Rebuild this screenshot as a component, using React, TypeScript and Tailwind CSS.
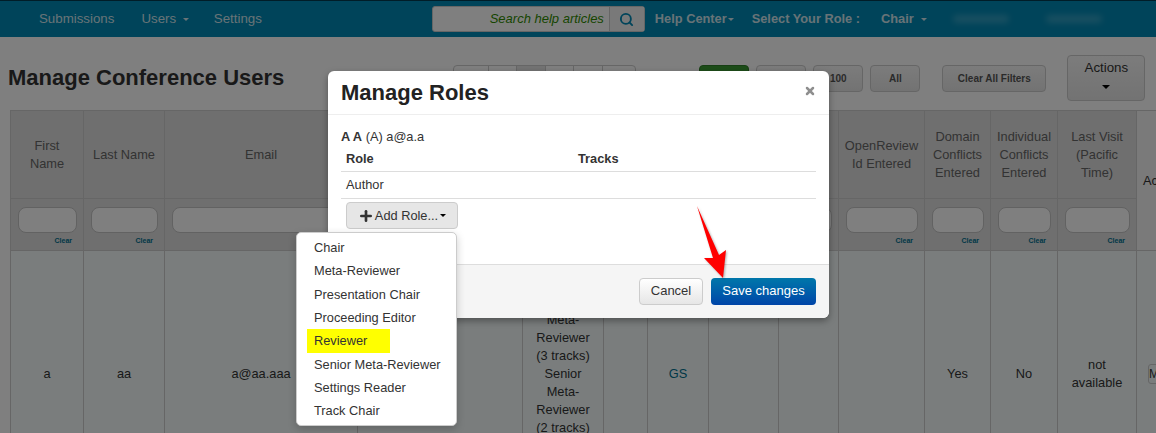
import { Plus, Search, X } from 'lucide-react'

const sans = "font-['Liberation_Sans',Arial,sans-serif]"

const columns = [73, 81, 193, 165, 81, 44, 61, 70, 60, 86, 66, 67, 79, 90]

const headers = [
  'First Name',
  'Last Name',
  'Email',
  '',
  '',
  '',
  '',
  '',
  '',
  'OpenReview Id Entered',
  'Domain Conflicts Entered',
  'Individual Conflicts Entered',
  'Last Visit (Pacific Time)',
  'Actions',
]

const roleLines = [
  'Author',
  'Chair',
  'Reader',
  'Meta-',
  'Reviewer',
  '(3 tracks)',
  'Senior',
  'Meta-',
  'Reviewer',
  '(2 tracks)',
  'Track',
  'Chair',
  'Reader',
]

const roles = [
  'Chair',
  'Meta-Reviewer',
  'Presentation Chair',
  'Proceeding Editor',
  'Reviewer',
  'Senior Meta-Reviewer',
  'Settings Reader',
  'Track Chair',
]

const pageButtons = [
  { label: '', cls: 'bg-[#3a9a32] border-[#2f7f28]' },
  { label: '', cls: 'bg-gradient-to-b from-[#f8f8f8] to-[#e6e6e6] border-[#ccc] ml-[7px]' },
  { label: '100', cls: 'bg-gradient-to-b from-[#f8f8f8] to-[#e6e6e6] border-[#ccc] ml-[7px]' },
  { label: 'All', cls: 'bg-gradient-to-b from-[#f8f8f8] to-[#e6e6e6] border-[#ccc] ml-[7px]' },
]

const Filter = ({ hidden }: { hidden?: boolean }) => (
  <td className="h-[52px] border border-[#ccc] bg-[#dedede] pt-[8px] pr-[6px] pl-[7px] align-top">
    {!hidden && (
      <>
        <div className="h-[26px] rounded-[8px] border border-[#c4c4c4] bg-white" />
        <div className="mt-[3px] pr-[5px] text-right text-[7px] leading-[10px] font-bold text-[#00708f]">Clear</div>
      </>
    )}
  </td>
)

export default function App() {
  return (
    <div className={`${sans} relative h-[433px] w-[1156px] overflow-hidden bg-white text-[12.8px] text-[#333]`}>
      <nav className="flex h-[37px] items-center border-t border-[#003a50] bg-[#0088b4] pl-[39px] text-[13.3px] text-[#d0e6ee]">
        <span className="mr-[27px]">Submissions</span>
        <span className="mr-[25px]">
          Users <span className="ml-[3px] inline-block border-x-[3px] border-t-[3px] border-x-transparent border-t-current align-middle" />
        </span>
        <span>Settings</span>
        <div className="ml-[170px] flex h-[26px] w-[213px] rounded-[3px] border border-[#ccc] bg-white">
          <div className="flex-1 pr-[5px] text-right text-[13px] leading-[24px] text-[#2e8b00] italic">Search help articles</div>
          <div className="flex w-[35px] items-center justify-center border-l border-[#ccc] bg-[#f2f2f2]">
            <Search size={15} strokeWidth={3} className="text-[#0088b4]" />
          </div>
        </div>
        <span className="ml-[10px] text-[12.8px] font-bold">Help Center</span>
        <span className="ml-[1px] inline-block border-x-[3px] border-t-[3px] border-x-transparent border-t-current" />
        <span className="ml-[18px] text-[12.8px] font-bold">Select Your Role :</span>
        <span className="ml-[21px] text-[12.8px] font-bold">Chair</span>
        <span className="ml-[7px] inline-block border-x-[3px] border-t-[3px] border-x-transparent border-t-current" />
        <span className="ml-[26px] h-[8px] w-[56px] rounded-full bg-white/20 blur-[3px]" />
        <span className="ml-[37px] h-[8px] w-[56px] rounded-full bg-white/20 blur-[3px]" />
      </nav>

      <div className="flex h-[73px]">
        <h1 className="mt-[27px] ml-[8px] text-[22px] leading-[28px] font-bold text-[#333]">Manage Conference Users</h1>
        <div className="mt-[28px] ml-[169px] flex h-[27px] w-[183px] rounded-[4px] border border-[#ccc]">
          <span className="w-[35px] border-r border-[#ccc]" />
          <span className="w-[28px] border-r border-[#ccc]" />
          <span className="w-[29px] border-r border-[#ccc] bg-[#e6e6e6]" />
          <span className="w-[28px] border-r border-[#ccc]" />
          <span className="w-[29px] border-r border-[#ccc]" />
        </div>
        <div className="mt-[28px] ml-[63px] flex">
          {pageButtons.map((b, i) => (
            <div key={i} className={`${b.cls} flex h-[27px] w-[50px] items-center justify-center rounded-[4px] border text-[10px] font-bold text-[#555]`}>
              {b.label}
            </div>
          ))}
        </div>
        <div className="mt-[28px] ml-[22px] flex h-[27px] w-[104px] items-center justify-center rounded-[4px] border border-[#ccc] bg-gradient-to-b from-[#f8f8f8] to-[#e6e6e6] text-[10px] font-bold text-[#555]">
          Clear All Filters
        </div>
        <div className="mt-[18px] ml-[21px] flex h-[46px] w-[78px] flex-col items-center rounded-[4px] border border-[#ccc] bg-gradient-to-b from-[#f8f8f8] to-[#e6e6e6] pt-[4px]">
          <span className="text-[13.3px] leading-[16px]">Actions</span>
          <span className="mt-[9px] border-x-[4px] border-t-[4px] border-x-transparent border-t-[#000]" />
        </div>
      </div>

      <table className="ml-[10px] table-fixed border-collapse text-center" style={{ width: columns.reduce((a, b) => a + b, 0) }}>
        <colgroup>
          {columns.map((w, i) => (
            <col key={i} style={{ width: w }} />
          ))}
        </colgroup>
        <thead>
          <tr className="h-[88px]">
            {headers.map((h, i) =>
              i === 13 ? (
                <th key={i} rowSpan={2} className="border border-[#ccc] bg-[#f4f4f4] pl-[6px] text-left font-normal">
                  {h}
                </th>
              ) : (
                <th key={i} className={`border border-[#ccc] bg-[#dedede] ${i === 0 ? 'px-[14px]' : 'px-[2px]'} leading-[18px] font-normal text-[#666]`}>
                  {h}
                </th>
              ),
            )}
          </tr>
          <tr>
            {headers.slice(0, 13).map((_, i) => (
              <Filter key={i} hidden={i > 2 && i < 8} />
            ))}
          </tr>
        </thead>
        <tbody>
          <tr className="bg-[#f4fbfb] leading-[18px]">
            <td className="border border-[#ccc]">a</td>
            <td className="border border-[#ccc]">aa</td>
            <td className="border border-[#ccc]">a@aa.aaa</td>
            <td className="border border-[#ccc]" />
            <td className="border border-[#ccc] py-[6px]">
              {roleLines.map((line, i) => (
                <div key={i}>{line}</div>
              ))}
            </td>
            <td className="border border-[#ccc]" />
            <td className="border border-[#ccc] text-[#00708f]">GS</td>
            <td className="border border-[#ccc]" />
            <td className="border border-[#ccc]" />
            <td className="border border-[#ccc]" />
            <td className="border border-[#ccc]">Yes</td>
            <td className="border border-[#ccc]">No</td>
            <td className="border border-[#ccc]">
              not
              <br />
              available
            </td>
            <td className="border border-[#ccc] pl-[11px] text-left">
              <span className="inline-block h-[20px] w-[30px] rounded-[3px] border border-[#ccc] text-[12px] leading-[18px]">M</span>
            </td>
          </tr>
        </tbody>
      </table>

      {/* backdrop */}
      <div className="absolute inset-0 bg-black/50" />

      {/* modal */}
      <div className="absolute top-[71px] left-[328px] flex h-[247px] w-[501px] flex-col rounded-[6px] bg-white shadow-[0_3px_7px_rgba(0,0,0,0.35)]">
        <div className="flex h-[44px] items-center justify-between border-b border-[#eee] pr-[13px] pl-[13px]">
          <h3 className="text-[22px] leading-[30px] font-bold text-[#222]">Manage Roles</h3>
          <X size={12} strokeWidth={5} className="-mt-[4px] text-[#8f8f8f]" />
        </div>
        <div className="flex-1 px-[13px] pt-[13px]">
          <div className="leading-[18px]">
            <b>A A</b> (A) a@a.a
          </div>
          <div className="flex h-[26px] items-center border-b border-[#ddd] px-[5px] font-bold">
            <span className="w-[232px]">Role</span>
            <span>Tracks</span>
          </div>
          <div className="flex h-[27px] items-center border-b border-[#ddd] px-[5px]">Author</div>
          <div className="mt-[3px] ml-[5px] flex h-[27px] w-[112px] items-center justify-center rounded-[4px] border border-[#ccc] bg-[#e6e6e6]">
            <Plus size={16} strokeWidth={4} className="mr-[1px] text-[#333]" />
            Add Role...
            <span className="ml-[2px] border-x-[3px] border-t-[3px] border-x-transparent border-t-[#000]" />
          </div>
        </div>
        <div className="flex h-[54px] items-center justify-end gap-[8px] rounded-b-[6px] border-t border-[#ddd] bg-[#f5f5f5] pr-[13px]">
          <div className="flex h-[27px] w-[64px] items-center justify-center rounded-[4px] border border-[#ccc] bg-gradient-to-b from-white to-[#e6e6e6] pb-[1px] text-[13px]">Cancel</div>
          <div className="flex h-[27px] w-[105px] items-center justify-center rounded-[4px] bg-gradient-to-b from-[#0077aa] to-[#0044a8] pb-[1px] text-[13px] text-white">Save changes</div>
        </div>
      </div>

      {/* role dropdown */}
      <div className="absolute top-[232px] left-[296px] w-[161px] rounded-[5px] border border-[#ccc] bg-white py-[3px] shadow-[0_3px_8px_rgba(0,0,0,0.2)]">
        {roles.map((role) => (
          <div key={role} className="flex h-[23.3px] items-center pl-[17px]">
            <span className={role === 'Reviewer' ? '-ml-[7px] flex h-[24px] w-[83px] items-center bg-[#ffff00] pl-[7px]' : ''}>{role}</span>
          </div>
        ))}
      </div>

      {/* red arrow annotation */}
      <svg className="absolute top-[200px] left-[690px]" width="45" height="85" viewBox="0 0 45 85">
        <polygon points="7,6 29,55 36,50 33,78 14,58 23,58" fill="#ff0000" style={{ filter: 'drop-shadow(1px 1px 1px rgba(0,0,0,0.3))' }} />
      </svg>
    </div>
  )
}
